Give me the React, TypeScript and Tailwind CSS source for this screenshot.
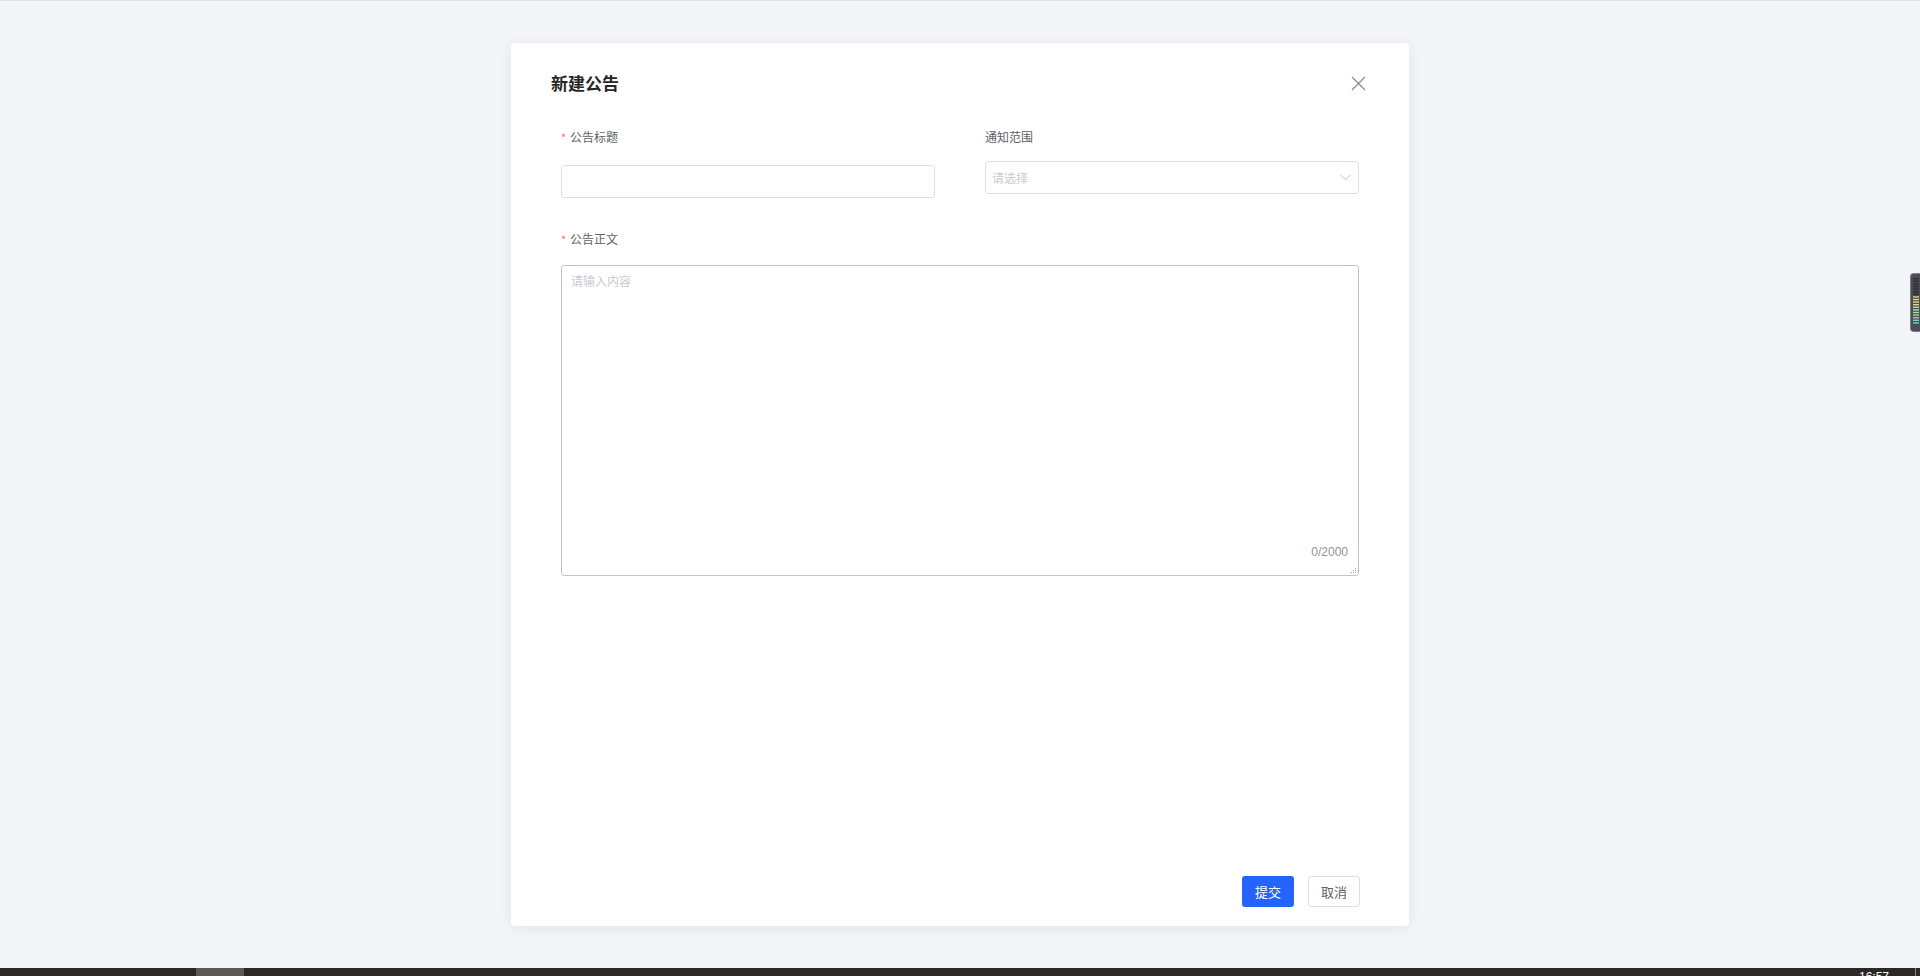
const cn = '[font-family:"Noto_Sans_CJK_SC","Liberation_Sans",sans-serif]';

const Label = ({ text, required }: { text: string; required?: boolean }) => (
  <div className="flex items-center h-[20px] text-[12px] text-[#606266]">
    {required && <span className="text-[#f56c6c] mr-[4px] w-[5px] text-[11px]">*</span>}
    <span>{text}</span>
  </div>
);

const CloseIcon = () => (
  <svg width="15" height="15" viewBox="0 0 15 15" fill="none">
    <path d="M1 1L14 14M14 1L1 14" stroke="#8b9098" strokeWidth="1.4" />
  </svg>
);

const Chevron = () => (
  <svg width="11" height="7" viewBox="0 0 11 7" fill="none">
    <path d="M0.5 0.8L5.5 5.8L10.5 0.8" stroke="#c0c4cc" strokeWidth="1" />
  </svg>
);

const ResizeDots = () => (
  <svg width="7" height="7" viewBox="0 0 7 7" fill="#a8abb2">
    <rect x="5" y="1" width="1" height="1" />
    <rect x="3" y="3" width="1" height="1" />
    <rect x="5" y="3" width="1" height="1" />
    <rect x="1" y="5" width="1" height="1" />
    <rect x="3" y="5" width="1" height="1" />
    <rect x="5" y="5" width="1" height="1" />
  </svg>
);

const MeterWidget = () => {
  const bars = [
    '#2b2d33', '#2b2d33', '#2b2d33', '#2b2d33', '#2b2d33', '#2b2d33', '#2b2d33',
    '#e6cf63', '#e6d36b', '#e3d977', '#d8dc7c', '#c6de80', '#b4df86', '#9fde93',
    '#8ddba4', '#7dd8b2', '#6fd5c0', '#66d2c8',
  ];
  return (
    <svg width="10" height="59" viewBox="0 0 10 59">
      <rect x="0.5" y="0.5" width="12" height="58" rx="3" fill="#4b4e56" stroke="#7a7d84" />
      {bars.map((c, i) => (
        <rect key={i} x="3" y={5 + i * 2.6} width="6" height="1.4" fill={c} />
      ))}
    </svg>
  );
};

export default function App() {
  return (
    <div className={`relative h-[976px] flex flex-col bg-[#f4f5f9] border-t border-[#dfe1e6] overflow-hidden ${cn}`}>
      <div className="flex-1 flex justify-center pt-[42px]">
        <div className="w-[898px] h-[883px] bg-white rounded-[4px] shadow-[0_2px_14px_rgba(0,0,0,0.08)] flex flex-col">
          <div className="flex items-center justify-between h-[26px] mt-[27px] pl-[40px] pr-[43px]">
            <h2 className="text-[17px] font-bold text-[#262626] leading-[26px]">新建公告</h2>
            <CloseIcon />
          </div>

          <div className="px-[50px] mt-[31px]">
            <div className="grid grid-cols-2 gap-x-[50px]">
              <div>
                <Label text="公告标题" required />
                <div className="mt-[18px] h-[33px] border border-[#dcdfe6] rounded-[3px]" />
              </div>
              <div>
                <Label text="通知范围" />
                <div className="mt-[14px] h-[33px] border border-[#dcdfe6] rounded-[3px] flex items-center justify-between pl-[6px] pr-[7px]">
                  <span className="text-[12px] text-[#c8cad0]">请选择</span>
                  <Chevron />
                </div>
              </div>
            </div>

            <div className="mt-[31px]">
              <Label text="公告正文" required />
              <div className="relative mt-[16px] h-[311px] border border-[#c0c4cc] rounded-[3px] pl-[9px] pt-[7px]">
                <p className="text-[12px] leading-[16px] text-[#c8cad0]">请输入内容</p>
                <span className="absolute right-[10px] bottom-[16px] text-[12px] leading-[14px] text-[#909399] [font-family:'Liberation_Sans',sans-serif]">
                  0/2000
                </span>
                <span className="absolute right-[1px] bottom-[1px] flex">
                  <ResizeDots />
                </span>
              </div>
            </div>
          </div>

          <div className="mt-auto mb-[19px] pr-[49px] flex justify-end gap-[14px]">
            <button className="w-[52px] h-[31px] rounded-[3px] bg-[#2563ff] text-white text-[13px]">提交</button>
            <button className="w-[52px] h-[31px] rounded-[3px] border border-[#dcdfe6] bg-white text-[#606266] text-[13px]">取消</button>
          </div>
        </div>
      </div>

      <div className="h-[8px] bg-[#2d2828] flex overflow-hidden">
        <div className="ml-[196px] w-[48px] bg-[#5b5757]" />
        <div className="flex-1" />
        <span className="text-white text-[12px] leading-[12px] pt-[3px] mr-[26px] [font-family:'Liberation_Sans',sans-serif]">16:57</span>
        <div className="w-[1px] bg-[#8a8585] mr-[4px]" />
      </div>

      <div className="absolute right-0 top-[272px] flex">
        <MeterWidget />
      </div>
    </div>
  );
}
